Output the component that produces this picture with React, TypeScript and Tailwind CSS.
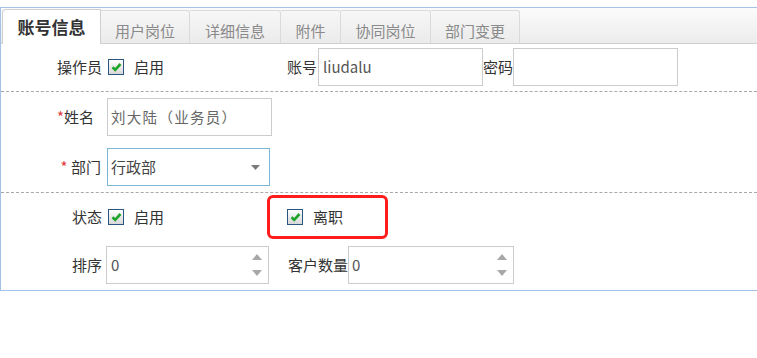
import React from "react";

const FONT = '"Noto Sans CJK SC", "Liberation Sans", sans-serif';

function Check() {
  return (
    <div className="w-[16px] h-[16px] shrink-0 border border-[#2a5580] bg-gradient-to-b from-[#ffffff] to-[#d8d8d8] flex items-center justify-center">
      <svg width="11" height="10" viewBox="0 0 11 10">
        <path d="M1.5 5.2 L4.2 7.8 L9.5 2" fill="none" stroke="#1fa52a" strokeWidth="2.6" />
      </svg>
    </div>
  );
}

function Spinner() {
  return (
    <div className="absolute right-[6px] top-0 bottom-0 flex flex-col justify-between py-[7px]">
      <svg width="10" height="6" viewBox="0 0 10 6">
        <path d="M0 6 L5 0 L10 6 Z" fill="#a8a8a8" />
      </svg>
      <svg width="10" height="6" viewBox="0 0 10 6">
        <path d="M0 0 L5 6 L10 0 Z" fill="#a8a8a8" />
      </svg>
    </div>
  );
}

const tabs = [
  { t: "用户岗位", w: "w-[89px]" },
  { t: "详细信息", w: "w-[91px]" },
  { t: "附件", w: "w-[60px]" },
  { t: "协同岗位", w: "w-[90px]" },
  { t: "部门变更", w: "w-[89px]" },
];

export default function App() {
  return (
    <div lang="zh-CN" className="w-[757px] h-[358px] bg-white overflow-hidden text-[#333]" style={{ fontFamily: FONT }}>
      <div className="mt-[7px] border-t border-l border-b border-[#a2c2ea]">
        {/* tab strip */}
        <div className="h-[36px] flex items-end border-b border-[#cfcfcf] bg-gradient-to-b from-[#fbfbfb] to-[#ececec] pl-[1px]">
          <div className="w-[99px] h-[35px] -mb-px bg-white border-t border-l border-r border-[#cfcfcf] rounded-tl-[4px] flex items-center justify-center text-[17px] font-bold text-[#333] leading-none pb-[2px]">
            账号信息
          </div>
          {tabs.map((x) => (
            <div
              key={x.t}
              className={`${x.w} h-[33px] border-t border-r border-[#dadada] rounded-tr-[3px] bg-gradient-to-b from-[#f7f7f7] to-[#ebebeb] flex items-end justify-center pb-[2px] text-[15px] text-[#8a8a8a] leading-[20px]`}
            >
              {x.t}
            </div>
          ))}
        </div>

        {/* row 1 */}
        <div className="flex items-center pt-[4px] pb-[5px] border-b border-dashed border-[#a8a8a8] text-[15px]">
          <div className="w-[286px] flex items-center">
            <div className="w-[101px] text-right">操作员</div>
            <div className="ml-[6px]">
              <Check />
            </div>
            <div className="ml-[10px]">启用</div>
          </div>
          <div className="w-[31px]">账号</div>
          <div className="w-[165px] h-[38px] border border-[#cccccc] flex items-center pl-[4px] text-[#555] text-[15px]">
            liudalu
          </div>
          <div className="w-[30px]">密码</div>
          <div className="w-[165px] h-[38px] border border-[#cccccc]" />
        </div>

        {/* block 2 */}
        <div className="pt-[6px] pb-[6px] border-b border-dashed border-[#a8a8a8] text-[15px] flex flex-col gap-[12px]">
          <div className="flex items-center">
            <div className="w-[101px] text-right pr-[8px]">
              <span className="text-[#e23b3b]">*</span>姓名
            </div>
            <div className="ml-[5px] w-[165px] h-[38px] border border-[#cccccc] flex items-center pl-[3px] text-[14.5px] tracking-[1.3px] text-[#666]">
              刘大陆（业务员）
            </div>
          </div>
          <div className="flex items-center">
            <div className="w-[101px] text-right pr-[1px]">
              <span className="text-[#e23b3b]">*</span> 部门
            </div>
            <div className="ml-[5px] w-[163px] h-[38px] border border-[#78b7d6] flex items-center justify-between pl-[3px] pr-[9px] text-[15px] text-[#444]">
              <span>行政部</span>
              <svg width="9" height="5" viewBox="0 0 9 5">
                <path d="M0 0 L9 0 L4.5 5 Z" fill="#7a7a7a" />
              </svg>
            </div>
          </div>
        </div>

        {/* block 3 */}
        <div className="pt-[2px] pb-[6px] text-[15px] flex flex-col gap-[7px]">
          <div className="flex items-center">
            <div className="w-[266px] flex items-center">
              <div className="w-[101px] text-right">状态</div>
              <div className="ml-[6px]">
                <Check />
              </div>
              <div className="ml-[10px]">启用</div>
            </div>
            <div className="w-[121px] h-[44px] border-[3px] border-[#ff1c1c] rounded-[6px] flex items-center pl-[17px]">
              <Check />
              <div className="ml-[10px]">离职</div>
            </div>
          </div>
          <div className="flex items-center">
            <div className="w-[101px] text-right">排序</div>
            <div className="relative ml-[4px] w-[163px] h-[38px] border border-[#cccccc] flex items-center pl-[4px] text-[15px] text-[#555]">
              0
              <Spinner />
            </div>
            <div className="ml-[19px] w-[60px]">客户数量</div>
            <div className="relative w-[166px] h-[38px] border border-[#cccccc] flex items-center pl-[3px] text-[15px] text-[#555]">
              0
              <Spinner />
            </div>
          </div>
        </div>
      </div>
    </div>
  );
}
